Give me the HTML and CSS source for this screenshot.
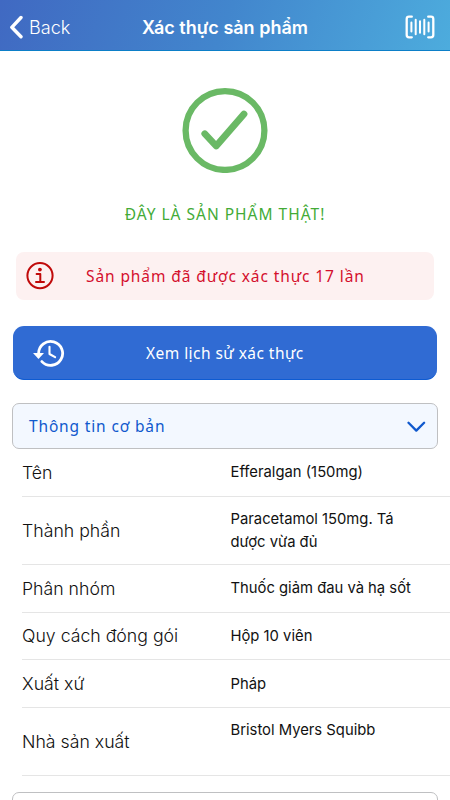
FILE: index.html
```html
<!DOCTYPE html>
<html lang="vi">
<head>
  <meta charset="UTF-8" />
  <meta name="viewport" content="width=device-width, initial-scale=1" />
  <title>Xác thực sản phẩm</title>
  <link rel="stylesheet" href="styles.css">
</head>
<body>

  <!-- HEADER -->
  <header class="navbar">
    <a class="back" href="#">
      <svg width="14" height="24" viewBox="0 0 14 24"><path d="M12 2.5L2.8 12.3l9.2 9.4" /></svg>
      <span>Back</span>
    </a>
    <h1>Xác thực sản phẩm</h1>
    <svg class="scan" width="30" height="24" viewBox="0 0 30 24">
      <path class="frame" d="M6.8 1.7H4Q1.7 1.7 1.7 4v16Q1.7 22.3 4 22.3h2.8M23.2 1.7H26Q28.3 1.7 28.3 4v16q0 2.3-2.3 2.3h-2.8" />
      <path class="bars" d="M6.4 7.5v9M10.7 4.7v14.6M15 6.3v11.4M19.3 4.7v14.6M23.6 7.5v9" />
    </svg>
  </header>

  <!-- RESULT -->
  <section class="result">
    <svg width="86" height="86" viewBox="0 0 86 86">
      <circle cx="43" cy="43.5" r="39.4" />
      <path class="check" d="M22.8 46.8L34.2 59L62 27" />
    </svg>
    <p>ĐÂY LÀ SẢN PHẨM THẬT!</p>
  </section>

  <div class="notice">
    <svg width="28" height="28" viewBox="0 0 28 28">
      <circle cx="14" cy="13.6" r="12.6" />
      <circle class="dot" cx="13.9" cy="7.6" r="1.9" />
      <path d="M10.6 12h3.7v7.9M10 20.1h8" />
    </svg>
    <span>Sản phẩm đã được xác thực 17 lần</span>
  </div>

  <button class="history">
    <svg width="32" height="28" viewBox="0 0 32 28">
      <path d="M5.6 14.3A12 12 0 1 1 8.9 22.6" />
      <path class="arrow" d="M0 14h11l-5.5 6z" />
      <path class="hands" d="M16.5 7.8v7.2l5.6 3.2" />
    </svg>
    <span>Xem lịch sử xác thực</span>
  </button>

  <!-- BASIC INFO -->
  <div class="panel">
    <span>Thông tin cơ bản</span>
    <svg width="20" height="12" viewBox="0 0 20 12"><path d="M2.5 2.8l7.8 7.8 7.8-7.8" /></svg>
  </div>
  <dl class="info">
    <div class="row"><dt>Tên</dt><dd>Efferalgan (150mg)</dd></div>
    <div class="row tall"><dt>Thành phần</dt><dd>Paracetamol 150mg. Tá dược vừa đủ</dd></div>
    <div class="row"><dt>Phân nhóm</dt><dd>Thuốc giảm đau và hạ sốt</dd></div>
    <div class="row"><dt>Quy cách đóng gói</dt><dd>Hộp 10 viên</dd></div>
    <div class="row"><dt>Xuất xứ</dt><dd>Pháp</dd></div>
    <div class="row tall"><dt>Nhà sản xuất</dt><dd>Bristol Myers Squibb</dd></div>
  </dl>

  <div class="panel next"></div>

</body>
</html>
```
FILE: styles.css
```css
* {
  margin: 0;
  padding: 0;
  box-sizing: border-box;
}
body {
  height: 800px;
  overflow: hidden;
  background: #fff;
  color: #111;
  font-family: Inter, "Liberation Sans", sans-serif;
}
svg {
  display: block;
  flex: none;
  fill: none;
  stroke-linecap: round;
  stroke-linejoin: round;
}

/* HEADER */
.navbar {
  display: grid;
  grid-template-columns: 1fr auto 1fr;
  align-items: center;
  height: 51px;
  padding: 4px 9px 0;
  background: linear-gradient(110deg, #4069c2, #4286cd 50%, #4dacdd);
  border-bottom: 1px solid #0c7fc8;
  color: #fff;
}
.back {
  display: flex;
  align-items: center;
  gap: 6px;
  color: #fff;
  font-size: 18.1px;
  font-weight: 350;
  text-decoration: none;
}
.back path {
  stroke: #fff;
  stroke-width: 3.4;
}
.navbar h1 {
  font-size: 18px;
  font-weight: 600;
}
.scan {
  justify-self: end;
  margin-right: 6px;
  stroke: #fff;
}
.frame {
  stroke-width: 2.3;
}
.bars {
  stroke-width: 2;
}

/* RESULT */
.result {
  display: flex;
  flex-direction: column;
  align-items: center;
  padding-top: 36px;
}
.result svg {
  stroke: #6ab965;
  stroke-width: 6.3;
}
.result .check {
  stroke-width: 6.8;
}
.result p {
  margin-top: 29px;
  color: #43ab37;
  font: 15.5px/24px "Noto Sans", sans-serif;
  letter-spacing: 1px;
}

/* NOTICE */
.notice {
  display: flex;
  align-items: center;
  height: 48px;
  margin: 26px 16px 0;
  padding-left: 10px;
  background: #fdf1f1;
  border-radius: 8px;
  color: #d40f2d;
  font: 15.5px/24px "Noto Sans", sans-serif;
  letter-spacing: 0.9px;
}
.notice svg {
  margin-right: 32px;
  stroke: #c00a0a;
  stroke-width: 2;
}
.notice .dot {
  fill: #c00a0a;
  stroke: none;
}

/* HISTORY BUTTON */
.history {
  display: flex;
  align-items: center;
  width: 424px;
  height: 54px;
  margin: 26px 13px 0;
  padding-left: 20px;
  background: #306bd3;
  border: 0;
  border-bottom: 1px solid #0e5bd2;
  border-radius: 11px;
  color: #fff;
  font: 15.5px/24px "Noto Sans", sans-serif;
  letter-spacing: 0.45px;
}
.history svg {
  margin-right: 81px;
  stroke: #fff;
  stroke-width: 2.8;
}
.history .arrow {
  fill: #fff;
  stroke: none;
}
.history .hands {
  stroke-width: 2.1;
}

/* PANELS */
.panel {
  display: flex;
  align-items: center;
  justify-content: space-between;
  height: 46px;
  margin: 23px 12px 0;
  padding: 0 11px 0 16px;
  background: #f3f8ff;
  border: 1px solid #bfc0c2;
  border-radius: 7px;
  color: #1059cd;
  font: 15.5px/24px "Noto Sans", sans-serif;
  letter-spacing: 0.85px;
}
.panel path {
  stroke: #1059cd;
  stroke-width: 2.3;
}
.next {
  margin-top: 16px;
  background: #fff;
}

/* INFO LIST */
.info {
  margin-left: 22px;
}
.row {
  display: grid;
  grid-template-columns: 208.5px 190px;
  align-items: center;
  height: 47.8px;
  border-bottom: 1px solid #e5e5e5;
}
.tall {
  height: 68px;
}
.row dt {
  font-size: 17.7px;
  font-weight: 350;
}
.row dd {
  min-height: 23px;
  padding-top: 1px;
  font-size: 14.8px;
  font-weight: 380;
  line-height: 23px;
}
.tall dd {
  min-height: 47px;
}
```
